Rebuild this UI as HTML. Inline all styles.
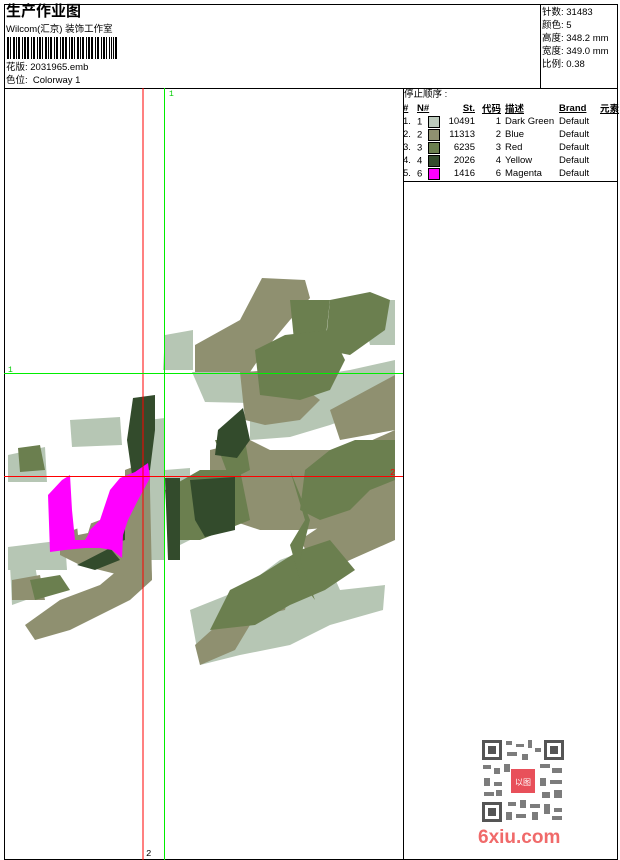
<!DOCTYPE html>
<html><head><meta charset="utf-8"><style>
body{margin:0;width:620px;height:860px;background:#fff;position:relative;overflow:hidden;font-family:"Liberation Sans","Noto Sans CJK SC",sans-serif;color:#000}
.a{position:absolute}
.t{font-size:10px;line-height:12px;white-space:nowrap}
table{border-collapse:collapse}
td{font-size:9.5px;padding:0;height:13px;white-space:nowrap}
.sw{display:inline-block;width:10px;height:10px;border:1px solid #000;vertical-align:middle}
</style></head><body>
<div class="a" style="left:4px;top:4px;width:612px;height:854px;border:1px solid #000"></div>
<div class="a" style="left:4px;top:88px;width:613px;border-top:1px solid #000"></div>
<div class="a" style="left:540px;top:4px;height:84px;border-left:1px solid #000"></div>
<div class="a" style="left:403px;top:88px;height:771px;border-left:1px solid #000"></div>
<div class="a" style="left:403px;top:181px;width:214px;border-top:1px solid #000"></div>

<div class="a" style="left:6px;top:3px;font-size:15px;font-weight:bold;line-height:18px">生产作业图</div>
<div class="a t" style="left:6px;top:24px;font-size:9.5px">Wilcom(汇京) 装饰工作室</div>
<svg class="a" style="left:7px;top:37px" width="112" height="22">
<g fill="#000">
<rect x="0" y="0" width="2" height="22"/><rect x="3" y="0" width="1" height="22"/><rect x="6" y="0" width="2" height="22"/><rect x="9" y="0" width="1" height="22"/><rect x="11" y="0" width="2" height="22"/><rect x="15" y="0" width="1" height="22"/><rect x="17" y="0" width="2" height="22"/><rect x="20" y="0" width="2" height="22"/><rect x="24" y="0" width="1" height="22"/><rect x="26" y="0" width="2" height="22"/><rect x="30" y="0" width="1" height="22"/><rect x="32" y="0" width="2" height="22"/><rect x="35" y="0" width="1" height="22"/><rect x="38" y="0" width="2" height="22"/><rect x="41" y="0" width="1" height="22"/><rect x="43" y="0" width="2" height="22"/><rect x="47" y="0" width="1" height="22"/><rect x="49" y="0" width="2" height="22"/><rect x="53" y="0" width="1" height="22"/><rect x="55" y="0" width="2" height="22"/><rect x="58" y="0" width="2" height="22"/><rect x="62" y="0" width="1" height="22"/><rect x="64" y="0" width="2" height="22"/><rect x="67" y="0" width="1" height="22"/><rect x="70" y="0" width="2" height="22"/><rect x="73" y="0" width="1" height="22"/><rect x="75" y="0" width="2" height="22"/><rect x="79" y="0" width="1" height="22"/><rect x="81" y="0" width="2" height="22"/><rect x="84" y="0" width="2" height="22"/><rect x="88" y="0" width="1" height="22"/><rect x="90" y="0" width="2" height="22"/><rect x="94" y="0" width="1" height="22"/><rect x="96" y="0" width="2" height="22"/><rect x="99" y="0" width="1" height="22"/><rect x="102" y="0" width="1" height="22"/><rect x="104" y="0" width="1" height="22"/><rect x="106" y="0" width="1" height="22"/><rect x="108" y="0" width="2" height="22"/>
</g></svg>
<div class="a t" style="left:6px;top:62px;font-size:9.5px">花版: 2031965.emb</div>
<div class="a t" style="left:6px;top:75px;font-size:9.5px">色位: &nbsp;Colorway 1</div>

<div class="a t" style="left:542px;top:6px;font-size:9.5px;line-height:13px">针数: 31483<br>颜色: 5<br>高度: 348.2 mm<br>宽度: 349.0 mm<br>比例: 0.38</div>

<div class="a t" style="left:404px;top:89px;font-size:9.5px">停止顺序 :</div>
<table class="a" style="left:403px;top:101px">
<tr style="font-weight:bold;text-decoration:underline"><td style="width:14px">#</td><td style="width:30px">N#</td><td style="width:28px;text-align:right">St.</td><td style="width:26px;text-align:right">代码</td><td style="width:54px;padding-left:4px">描述</td><td style="width:36px">Brand</td><td style="padding-left:5px">元素</td></tr>
<tr><td>1.</td><td>1 &nbsp;<span class="sw" style="background:#bccabc"></span></td><td style="text-align:right">10491</td><td style="text-align:right">1</td><td style="padding-left:4px">Dark Green</td><td>Default</td><td></td></tr>
<tr><td>2.</td><td>2 &nbsp;<span class="sw" style="background:#8f9070"></span></td><td style="text-align:right">11313</td><td style="text-align:right">2</td><td style="padding-left:4px">Blue</td><td>Default</td><td></td></tr>
<tr><td>3.</td><td>3 &nbsp;<span class="sw" style="background:#6b7f4f"></span></td><td style="text-align:right">6235</td><td style="text-align:right">3</td><td style="padding-left:4px">Red</td><td>Default</td><td></td></tr>
<tr><td>4.</td><td>4 &nbsp;<span class="sw" style="background:#334b2c"></span></td><td style="text-align:right">2026</td><td style="text-align:right">4</td><td style="padding-left:4px">Yellow</td><td>Default</td><td></td></tr>
<tr><td>5.</td><td>6 &nbsp;<span class="sw" style="background:#ff00ff"></span></td><td style="text-align:right">1416</td><td style="text-align:right">6</td><td style="padding-left:4px">Magenta</td><td>Default</td><td></td></tr>
</table>

<svg class="a" style="left:0;top:0" width="403" height="860">
<g fill="#b6c6b4">
<polygon points="165,335 193,330 193,370 163,370"/>
<polygon points="192,372 250,372 250,403 205,402"/>
<polygon points="250,390 300,378 350,370 395,360 395,395 370,410 330,425 290,437 250,440"/>
<polygon points="360,300 395,300 395,345 370,345"/>
<polygon points="70,420 120,417 122,445 72,447"/>
<polygon points="8,455 45,447 47,482 8,482"/>
<polygon points="8,547 65,540 67,570 8,570"/>
<polygon points="10,565 35,565 40,595 12,605"/>
<polygon points="148,420 165,418 165,560 150,560"/>
<polygon points="165,470 190,468 190,540 170,550"/>
<polygon points="190,610 240,590 280,560 320,545 340,590 385,585 383,610 330,625 290,645 240,655 200,665"/>
<polygon points="275,470 330,455 335,485 275,495"/>
<polygon points="325,530 350,520 350,545 325,545"/>
</g>
<g fill="#8f9070">
<polygon points="195,345 240,320 262,278 305,280 310,298 290,320 265,350 250,372 195,372"/>
<polygon points="240,372 280,370 300,385 320,400 300,420 265,425 245,420"/>
<polygon points="330,410 395,375 395,430 340,440"/>
<polygon points="210,450 250,440 270,450 300,450 350,450 395,430 395,510 360,525 300,530 260,530 230,520 210,495"/>
<polygon points="25,625 60,600 100,585 130,560 150,540 152,580 130,600 100,615 70,630 35,640"/>
<polygon points="12,580 40,575 45,600 12,600"/>
<polygon points="60,535 100,520 130,500 150,490 152,580 120,575 80,565 60,555"/>
<polygon points="300,540 330,520 370,490 395,490 395,540 350,560 320,575"/>
<polygon points="195,645 225,618 250,625 235,650 200,665"/>
<polygon points="125,470 150,460 150,500 125,500"/>
<polygon points="262,585 290,590 285,610 262,615"/>
</g>
<g fill="#6b7f4f">
<polygon points="330,300 370,292 390,300 385,330 350,355 325,350"/>
<polygon points="290,300 330,300 325,345 295,350"/>
<polygon points="255,350 285,335 330,330 345,360 330,390 300,400 260,395"/>
<polygon points="305,470 330,450 355,440 395,440 395,480 370,490 350,510 320,520 300,510"/>
<polygon points="210,630 230,590 260,575 300,550 330,540 355,570 325,590 290,605 255,625"/>
<polygon points="215,440 245,440 250,470 230,480"/>
<polygon points="165,490 200,470 240,470 250,520 200,540 170,540"/>
<polygon points="18,448 40,445 45,470 20,472"/>
<polygon points="290,470 305,520 290,545 300,580 315,600 300,560 310,520"/>
<polygon points="30,580 60,575 70,590 35,600"/>
</g>
<g fill="#334b2c">
<polygon points="133,398 155,395 155,430 150,470 132,475 127,440"/>
<polygon points="165,478 180,478 180,560 168,560"/>
<polygon points="190,480 235,477 235,530 205,537 195,520"/>
<polygon points="218,430 243,408 250,440 237,458 215,455"/>
<polygon points="77,565 110,548 120,560 95,570"/>
<polygon points="110,515 125,505 125,540 110,545"/>
</g>
<g fill="#ff00ff">
<polygon points="48,495 62,480 70,475 72,510 75,540 85,540 88,535 90,530 100,520 105,505 110,490 120,478 135,472 148,463 150,478 138,500 128,520 123,535 122,558 112,550 100,548 85,548 65,550 50,552"/>
</g>
<g fill="#fff">
<polygon points="75,505 82,500 90,498 92,520 88,533 78,535"/>
</g>
<line x1="143" y1="88" x2="143" y2="860" stroke="#f00" stroke-width="1"/>
<line x1="164.5" y1="88" x2="164.5" y2="860" stroke="#0e0" stroke-width="1"/>
<line x1="4" y1="373.5" x2="403" y2="373.5" stroke="#0e0" stroke-width="1"/>
<line x1="4" y1="476.5" x2="403" y2="476.5" stroke="#f00" stroke-width="1"/>
<text x="169" y="96" font-size="8" fill="#0c0" font-family="Liberation Mono">1</text>
<text x="8" y="372" font-size="8" fill="#0c0" font-family="Liberation Mono">1</text>
<text x="390" y="475" font-size="9" fill="#f00" font-family="Liberation Mono">2</text>
<text x="146" y="856" font-size="9" fill="#000" font-family="Liberation Mono">2</text>
</svg>

<svg class="a" style="left:480px;top:738px" width="86" height="86">
<rect width="86" height="86" fill="#fff"/>
<g fill="#555">
<rect x="2" y="2" width="20" height="20"/><rect x="64" y="2" width="20" height="20"/><rect x="2" y="64" width="20" height="20"/>
</g>
<g fill="#fff"><rect x="5" y="5" width="14" height="14"/><rect x="67" y="5" width="14" height="14"/><rect x="5" y="67" width="14" height="14"/></g>
<g fill="#555"><rect x="8" y="8" width="8" height="8"/><rect x="70" y="8" width="8" height="8"/><rect x="8" y="70" width="8" height="8"/></g>
<g fill="#666" opacity="0.85">
<rect x="26" y="3" width="6" height="4"/><rect x="36" y="6" width="8" height="3"/><rect x="48" y="2" width="4" height="8"/><rect x="55" y="10" width="6" height="4"/><rect x="27" y="14" width="10" height="4"/><rect x="42" y="16" width="6" height="6"/>
<rect x="3" y="27" width="8" height="4"/><rect x="14" y="30" width="6" height="6"/><rect x="24" y="26" width="6" height="8"/><rect x="60" y="26" width="10" height="4"/><rect x="72" y="30" width="10" height="5"/>
<rect x="4" y="40" width="6" height="8"/><rect x="14" y="44" width="8" height="4"/><rect x="60" y="40" width="6" height="8"/><rect x="70" y="42" width="12" height="4"/>
<rect x="4" y="54" width="10" height="4"/><rect x="16" y="52" width="6" height="6"/><rect x="62" y="54" width="8" height="6"/><rect x="74" y="52" width="8" height="8"/>
<rect x="28" y="64" width="8" height="4"/><rect x="40" y="62" width="6" height="8"/><rect x="50" y="66" width="10" height="4"/><rect x="64" y="66" width="6" height="10"/><rect x="74" y="70" width="8" height="4"/>
<rect x="26" y="74" width="6" height="8"/><rect x="36" y="76" width="10" height="4"/><rect x="52" y="74" width="6" height="8"/><rect x="72" y="78" width="10" height="4"/>
</g>
<rect x="31" y="31" width="24" height="24" fill="#e8505a"/>
<text x="43" y="47" font-size="8" fill="#fff" text-anchor="middle" font-family="Noto Sans CJK SC">以图</text>
</svg>
<div class="a" style="left:478px;top:827px;font-size:19px;font-weight:bold;color:#f06a6a;font-family:'Liberation Sans',sans-serif">6xiu.com</div>
</body></html>
